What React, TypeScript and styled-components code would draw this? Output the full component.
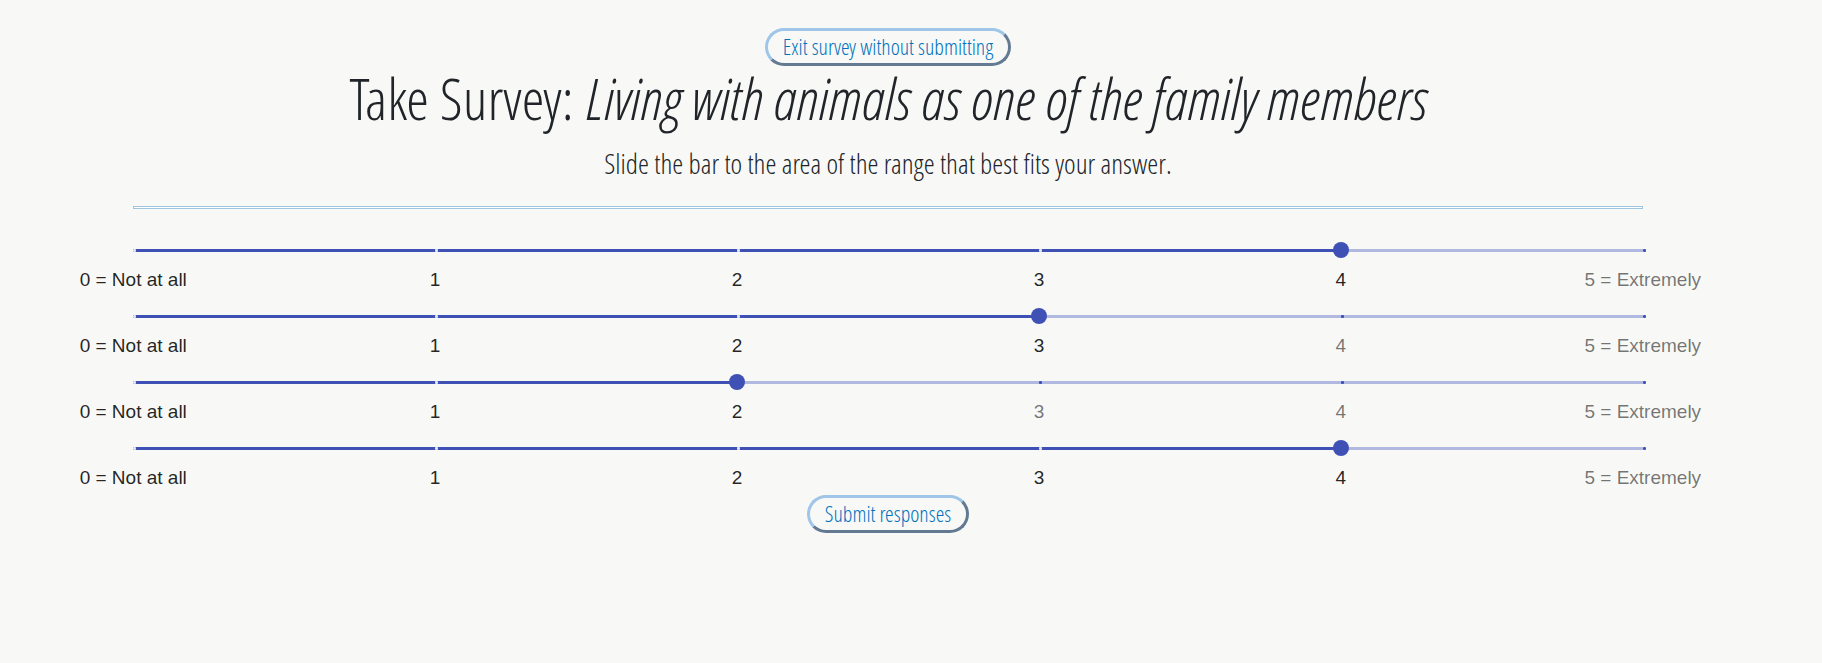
import React, { useId, useState } from 'react';
import styled, { createGlobalStyle } from 'styled-components';

const INDIGO = '#3f51b5';
const MAX = 5;

const GlobalStyle = createGlobalStyle`
  *, *::before, *::after { box-sizing: border-box; }
  body {
    margin: 0;
    background: #f8f9f7;
    color: #212529;
    font-family: 'Open Sans Condensed Light', 'Open Sans', sans-serif;
    font-weight: 300;
  }
`;

const Page = styled.main`
  display: flex;
  flex-direction: column;
  align-items: center;
  padding: 28px 46px 40px 0;
`;

const PillButton = styled.button`
  padding: 0 15px 2px;
  border: 3px solid;
  border-color: #9fc5e8 #647a92 #647a92 #9fc5e8;
  border-radius: 20px;
  background: transparent;
  color: #0072bc;
  font-family: inherit;
  font-weight: 300;
  font-size: 22px;
  line-height: 30px;
  cursor: pointer;
`;

const Title = styled.h1`
  margin: 0 0 12px;
  font-size: 58px;
  font-weight: 300;
  line-height: 64px;
  text-align: center;
`;

const Instructions = styled.p`
  margin: 0;
  font-size: 28px;
  line-height: 42px;
  text-align: center;
`;

const Divider = styled.hr`
  width: 85%;
  height: 3px;
  margin: 22px 0 32px;
  border: 1px solid #9fc5e0;
  background: #ffffff;
`;

const Questions = styled.form`
  display: flex;
  flex-direction: column;
  align-items: center;
  width: 100%;
`;

const QuestionList = styled.div`
  display: flex;
  flex-direction: column;
  gap: 10px;
  width: 85%;
`;

const Question = styled.div`
  padding-bottom: 5px;
`;

const SliderBox = styled.div`
  position: relative;
  display: flex;
  align-items: center;
  height: 19px;
`;

const Rail = styled.div`
  width: 100%;
  height: 3px;
  background: #b2b9e0;
`;

const Filled = styled.div`
  height: 3px;
  background: ${INDIGO};
`;

const Mark = styled.span<{ $active: boolean }>`
  position: absolute;
  top: 8px;
  width: 3px;
  height: 3px;
  border-radius: 1px;
  background: ${(p) => (p.$active ? '#e3e5f2' : INDIGO)};
`;

const Range = styled.input`
  position: absolute;
  inset: 0 -8px;
  width: calc(100% + 16px);
  height: 18px;
  margin: 0;
  appearance: none;
  background: transparent;
  cursor: pointer;

  &::-webkit-slider-thumb {
    appearance: none;
    width: 16px;
    height: 16px;
    border: 0;
    border-radius: 50%;
    background: ${INDIGO};
  }
`;

const Labels = styled.div`
  display: grid;
  grid-template-columns: repeat(6, 20%);
  justify-content: center;
  margin-top: 8px;
`;

const Label = styled.span<{ $active: boolean }>`
  color: ${(p) => (p.$active ? 'rgba(0, 0, 0, 0.87)' : 'rgba(0, 0, 0, 0.54)')};
  font-family: 'Liberation Sans', Arial, sans-serif;
  font-size: 19px;
  font-weight: 400;
  line-height: 24px;
  text-align: center;
  white-space: nowrap;
`;

const labels = ['0 = Not at all', '1', '2', '3', '4', '5 = Extremely'];
const answers = [4, 3, 2, 4];

function RangeQuestion({ initial, name }: { initial: number; name: string }) {
  const [value, setValue] = useState(initial);
  const id = useId();
  return (
    <Question>
      <SliderBox>
        <Rail>
          <Filled style={{ width: `${(value / MAX) * 100}%` }} />
        </Rail>
        {labels.map((text, i) => (
          <Mark key={text} $active={i <= value} style={{ left: `${(i / MAX) * 100}%` }} />
        ))}
        <Range
          type="range"
          name={name}
          min={0}
          max={MAX}
          step={1}
          value={value}
          aria-labelledby={id}
          onChange={(e) => setValue(Number(e.target.value))}
        />
      </SliderBox>
      <Labels id={id}>
        {labels.map((text, i) => (
          <Label key={text} $active={i <= value}>
            {text}
          </Label>
        ))}
      </Labels>
    </Question>
  );
}

export default function App() {
  return (
    <>
      <GlobalStyle />
      <Page>
        <PillButton type="button">Exit survey without submitting</PillButton>
        <Title>
          Take Survey: <em>Living with animals as one of the family members</em>
        </Title>
        <Instructions>Slide the bar to the area of the range that best fits your answer.</Instructions>
        <Divider />
        <Questions onSubmit={(e) => e.preventDefault()}>
          <QuestionList>
            {answers.map((answer, i) => (
              <RangeQuestion key={i} name={`question-${i + 1}`} initial={answer} />
            ))}
          </QuestionList>
          <PillButton type="submit">Submit responses</PillButton>
        </Questions>
      </Page>
    </>
  );
}
